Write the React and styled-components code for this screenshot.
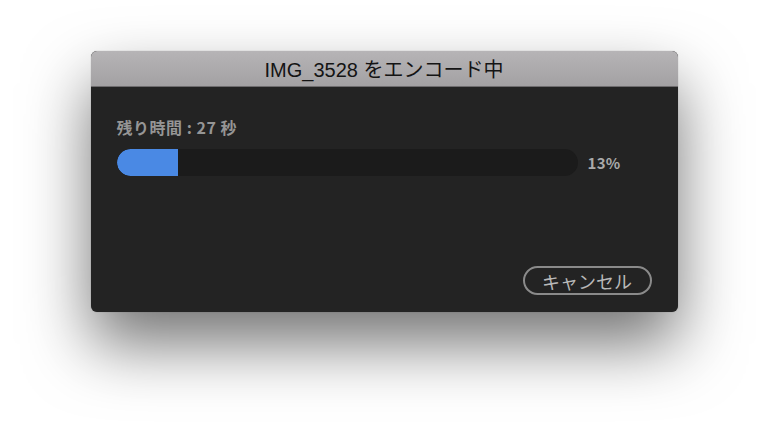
import styled, { createGlobalStyle } from 'styled-components';

const GlobalStyle = createGlobalStyle`
  html, body {
    margin: 0;
    padding: 0;
    background: #ffffff;
  }
  body {
    font-family: "Noto Sans CJK JP", "Noto Sans", sans-serif;
  }
`;

const Page = styled.div`
  width: 768px;
  height: 441px;
  display: flex;
  flex-direction: column;
  align-items: center;
  padding-top: 51px;
  box-sizing: border-box;
  overflow: hidden;
`;

const Dialog = styled.div`
  width: 587px;
  height: 261px;
  display: flex;
  flex-direction: column;
  border-radius: 6px;
  overflow: hidden;
  background: #232323;
  box-shadow: 0 32px 65px rgba(0, 0, 0, 0.55), 0 0 1px rgba(0, 0, 0, 0.4);
`;

const TitleBar = styled.div`
  height: 35px;
  flex-shrink: 0;
  display: flex;
  align-items: center;
  justify-content: center;
  background: linear-gradient(#b6b4b6, #a3a1a3);
  border-bottom: 1px solid #6e6c6e;
  color: #141414;
  font-family: "Liberation Sans", "Noto Sans CJK JP", sans-serif;
  font-size: 20px;
`;

const Body = styled.div`
  flex: 1;
  display: flex;
  flex-direction: column;
  padding: 30px 26px 17px 26px;
`;

const Label = styled.div`
  color: #959595;
  font-size: 16px;
  font-weight: 700;
  letter-spacing: 0.5px;
  line-height: 20px;
  margin-bottom: 12px;
`;

const ProgressRow = styled.div`
  display: flex;
  align-items: center;
  gap: 10px;
`;

const Track = styled.div`
  width: 461px;
  height: 27px;
  border-radius: 14px;
  background: #1b1b1b;
  overflow: hidden;
`;

const Fill = styled.div`
  height: 100%;
  background: #4a89e4;
  border-radius: 14px 0 0 14px;
`;

const Percent = styled.span`
  color: #aaaaaa;
  font-size: 15px;
  font-weight: 700;
  letter-spacing: 0.3px;
`;

const Footer = styled.div`
  margin-top: auto;
  display: flex;
  justify-content: flex-end;
`;

const CancelButton = styled.button`
  width: 129px;
  height: 29px;
  box-sizing: border-box;
  border: 2px solid #8a8a8a;
  border-radius: 15px;
  background: transparent;
  color: #b8b8b8;
  font-family: "Noto Sans CJK JP", sans-serif;
  font-size: 18px;
  line-height: 1;
  padding: 0;
  display: flex;
  align-items: center;
  justify-content: center;
`;

export default function App() {
  const progress = 13;
  return (
    <>
      <GlobalStyle />
      <Page>
        <Dialog>
          <TitleBar>IMG_3528 をエンコード中</TitleBar>
          <Body>
            <Label>残り時間 : 27 秒</Label>
            <ProgressRow>
              <Track>
                <Fill style={{ width: `${(progress / 100) * 461 + 2}px` }} />
              </Track>
              <Percent>{progress}%</Percent>
            </ProgressRow>
            <Footer>
              <CancelButton>キャンセル</CancelButton>
            </Footer>
          </Body>
        </Dialog>
      </Page>
    </>
  );
}
